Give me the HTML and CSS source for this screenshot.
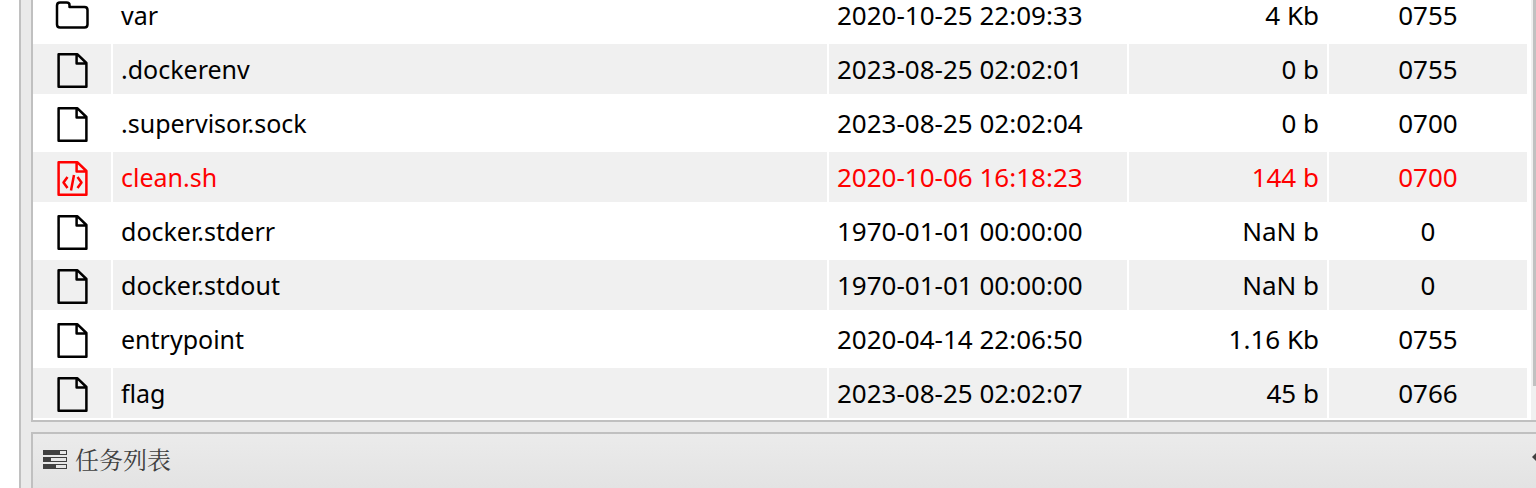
FILE: index.html
```html
<!DOCTYPE html>
<html lang="zh-CN">
<head>
  <meta charset="UTF-8">
  <meta name="viewport" content="width=device-width, initial-scale=1.0">
  <title>文件管理</title>
  <link rel="stylesheet" href="styles.css">
</head>
<body>
  <svg class="sprite" aria-hidden="true">
    <symbol id="icon-folder" viewBox="0 0 40 40">
      <path d="M5 12V10.500Q5 7.500 8 7.500H14.500Q17.500 7.500 17.500 10V12H32.500Q35.500 12 35.500 15V29.500Q35.500 32.500 32.500 32.500H8Q5 32.500 5 29.500Z"/>
    </symbol>
    <symbol id="icon-file" viewBox="0 0 40 40">
      <path d="M6.600 5.300H25.500L34.400 14V37.700H6.600ZM24.600 5.300V14.500H34.400"/>
    </symbol>
    <symbol id="icon-code" viewBox="0 0 40 40">
      <path d="M6.600 5.300H25.500L34.400 14V37.700H6.600ZM24.600 5.300V14.500H34.400M15.500 20L11.500 25.500L15.500 31M25.500 20L29.500 25.500L25.500 31M22 18L19 33.500"/>
    </symbol>
  </svg>

  <main class="workspace">
    <section class="panel files">
      <table class="file-table">
        <colgroup>
          <col class="col-icon">
          <col>
          <col class="col-time">
          <col class="col-size">
          <col class="col-attr">
        </colgroup>
        <tbody>
          <tr>
            <td class="icon"><svg><use href="#icon-folder"/></svg></td>
            <td class="name">var</td>
            <td>2020-10-25 22:09:33</td>
            <td class="size">4 Kb</td>
            <td class="attr">0755</td>
          </tr>
          <tr>
            <td class="icon"><svg><use href="#icon-file"/></svg></td>
            <td class="name">.dockerenv</td>
            <td>2023-08-25 02:02:01</td>
            <td class="size">0 b</td>
            <td class="attr">0755</td>
          </tr>
          <tr>
            <td class="icon"><svg><use href="#icon-file"/></svg></td>
            <td class="name">.supervisor.sock</td>
            <td>2023-08-25 02:02:04</td>
            <td class="size">0 b</td>
            <td class="attr">0700</td>
          </tr>
          <tr class="danger">
            <td class="icon"><svg><use href="#icon-code"/></svg></td>
            <td class="name">clean.sh</td>
            <td>2020-10-06 16:18:23</td>
            <td class="size">144 b</td>
            <td class="attr">0700</td>
          </tr>
          <tr>
            <td class="icon"><svg><use href="#icon-file"/></svg></td>
            <td class="name">docker.stderr</td>
            <td>1970-01-01 00:00:00</td>
            <td class="size">NaN b</td>
            <td class="attr">0</td>
          </tr>
          <tr>
            <td class="icon"><svg><use href="#icon-file"/></svg></td>
            <td class="name">docker.stdout</td>
            <td>1970-01-01 00:00:00</td>
            <td class="size">NaN b</td>
            <td class="attr">0</td>
          </tr>
          <tr>
            <td class="icon"><svg><use href="#icon-file"/></svg></td>
            <td class="name">entrypoint</td>
            <td>2020-04-14 22:06:50</td>
            <td class="size">1.16 Kb</td>
            <td class="attr">0755</td>
          </tr>
          <tr>
            <td class="icon"><svg><use href="#icon-file"/></svg></td>
            <td class="name">flag</td>
            <td>2023-08-25 02:02:07</td>
            <td class="size">45 b</td>
            <td class="attr">0766</td>
          </tr>
        </tbody>
      </table>
      <div class="scrollbar"><div class="thumb"></div></div>
    </section>

    <section class="panel tasks">
      <svg class="tasks-icon" viewBox="0 0 24 20">
        <path fill-rule="evenodd" d="M0 0H24V5H0ZM17 1V4H23V1ZM0 7H24V12H0ZM8 8V11H23V8ZM0 14H24V19H0ZM13 15V18H23V15Z"/>
      </svg>
      <span>任务列表</span>
      <svg class="tasks-arrow" viewBox="0 0 4 8"><path d="M4 0V8L0 4Z"/></svg>
    </section>
  </main>
</body>
</html>
```
FILE: styles.css
```css
body {
  margin: 0;
  background: #fff;
  font-family: "Noto Sans", Tahoma, sans-serif;
  overflow: hidden;
}
.sprite {
  display: none;
}
.workspace {
  display: flex;
  flex-direction: column;
  gap: 10px;
  height: 100vh;
  margin-left: 19px;
  padding-left: 10px;
  background: #eaeaea;
  border-left: 2px solid #c0c0c0;
  box-sizing: border-box;
}
.panel {
  display: flex;
  border: 2px solid #c0c0c0;
  border-right: 0;
}

/* file list, scrolled to the end */
.files {
  flex: none;
  border-top: 0;
  background: #fff;
}
.file-table {
  flex: 1;
  margin: -12px 2px 0 0;
  border-collapse: separate;
  border-spacing: 0;
  table-layout: fixed;
  width: 100%;
  font-size: 26px;
  line-height: 50px;
}
.col-icon {
  width: 80px;
}
.col-time {
  width: 300px;
}
.col-size,
.col-attr {
  width: 200px;
}
.file-table td {
  height: 50px;
  padding: 0 8px;
  border: solid #fff;
  border-width: 2px 2px 2px 0;
  white-space: nowrap;
}
.file-table tr:nth-child(even) td {
  background: #f0f0f0;
}
.file-table .icon {
  padding: 0;
  text-align: center;
}
.icon svg {
  display: block;
  width: 40px;
  height: 40px;
  margin: 0 auto;
  fill: none;
  stroke: currentColor;
  stroke-width: 2.500;
  stroke-linejoin: round;
}
.file-table .name {
  font-size: 25px;
}
.file-table .size {
  text-align: right;
}
.file-table .attr {
  text-align: center;
}
.file-table .danger {
  color: #f00;
}
.scrollbar {
  width: 5px;
  background: #f0f0f0;
}
.thumb {
  height: 386px;
  margin-left: 2px;
  background: #c1c1c1;
}

/* task list header */
.tasks {
  flex: 1;
  align-items: flex-start;
  gap: 8px;
  padding: 8px 0 0 10px;
  border-bottom: 0;
  background: linear-gradient(#ebebeb, #e3e3e3);
  color: #404040;
  font-family: "Noto Serif CJK SC", "Noto Sans CJK SC", serif;
  font-size: 24px;
  line-height: 34px;
}
.tasks-icon {
  width: 24px;
  height: 20px;
  margin-top: 8px;
  fill: #404040;
}
.tasks-arrow {
  width: 4px;
  height: 8px;
  margin: 11px 0 0 auto;
  fill: #404040;
}
```
